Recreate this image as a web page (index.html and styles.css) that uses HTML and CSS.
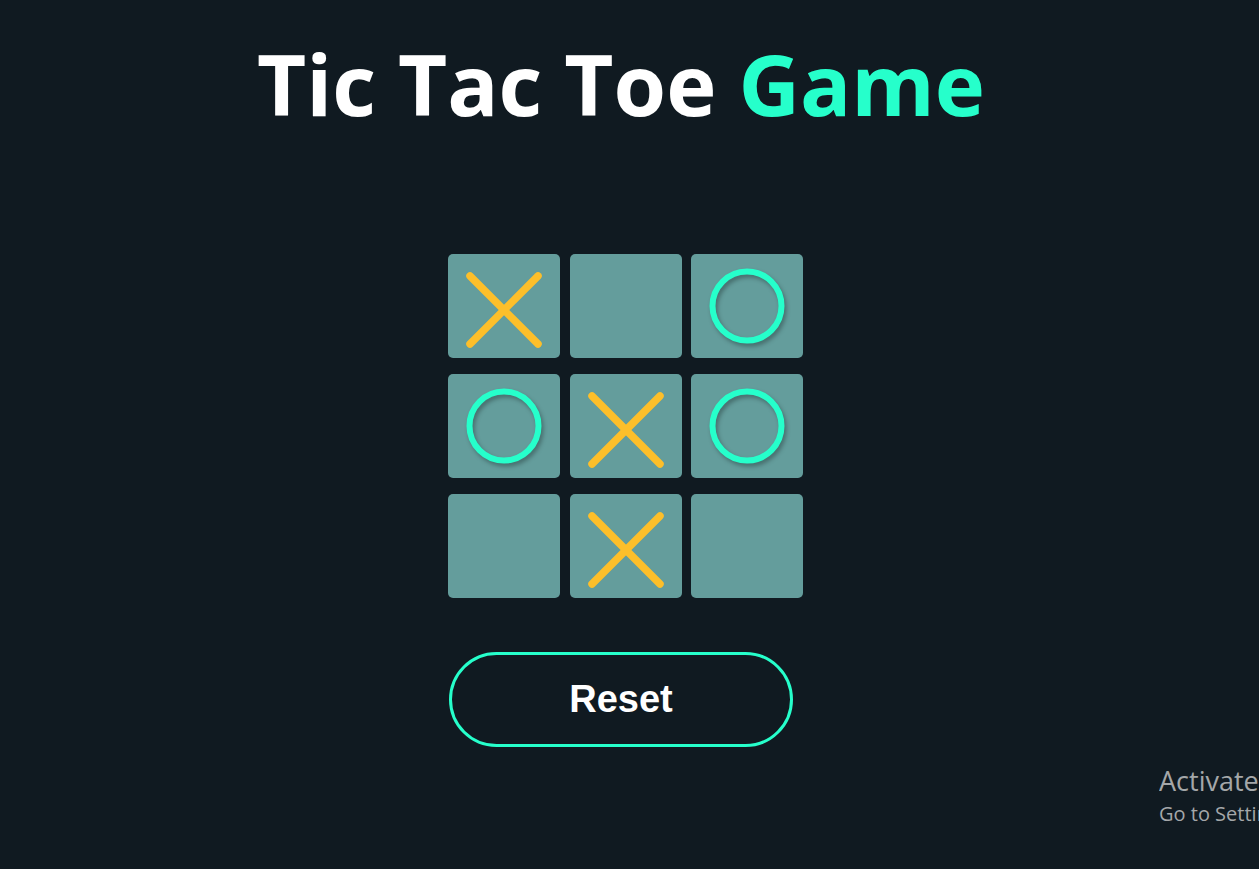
FILE: index.html
```html
<!DOCTYPE html>
<html lang="en">
<head>
<meta charset="utf-8">
<title>Tic Tac Toe Game</title>
<link rel="stylesheet" href="styles.css">
</head>
<body>
<main class="app">
  <h1 class="title">Tic Tac Toe <span class="accent">Game</span></h1>
  <div class="board">
    <div class="cell"><svg class="mark" viewBox="0 0 112 104" width="112" height="104"><line class="x" x1="22" y1="22" x2="90" y2="90"/><line class="x" x1="90" y1="22" x2="22" y2="90"/></svg></div>
    <div class="cell"></div>
    <div class="cell"><svg class="mark o-mark" viewBox="0 0 112 104" width="112" height="104"><circle class="o" cx="56" cy="52" r="34.5"/></svg></div>
    <div class="cell"><svg class="mark o-mark" viewBox="0 0 112 104" width="112" height="104"><circle class="o" cx="56" cy="52" r="34.5"/></svg></div>
    <div class="cell"><svg class="mark" viewBox="0 0 112 104" width="112" height="104"><line class="x" x1="22" y1="22" x2="90" y2="90"/><line class="x" x1="90" y1="22" x2="22" y2="90"/></svg></div>
    <div class="cell"><svg class="mark o-mark" viewBox="0 0 112 104" width="112" height="104"><circle class="o" cx="56" cy="52" r="34.5"/></svg></div>
    <div class="cell"></div>
    <div class="cell"><svg class="mark" viewBox="0 0 112 104" width="112" height="104"><line class="x" x1="22" y1="22" x2="90" y2="90"/><line class="x" x1="90" y1="22" x2="22" y2="90"/></svg></div>
    <div class="cell"></div>
  </div>
  <button class="reset" type="button">Reset</button>
</main>
<div class="watermark">
  <div class="wm-title">Activate Windows</div>
  <div class="wm-sub">Go to Settings to activate Windows.</div>
</div>
</body>
</html>
```
FILE: styles.css
```css
html, body {
  margin: 0;
  padding: 0;
  height: 100%;
  overflow: hidden;
}
body {
  background: #101a21;
  font-family: "Open Sans", "Liberation Sans", sans-serif;
  color: #ffffff;
}
.app {
  width: 1242px;
  display: flex;
  flex-direction: column;
  align-items: center;
}
.title {
  margin: 23px 0 0;
  font-size: 85px;
  font-weight: 700;
  line-height: 120px;
  letter-spacing: 0;
}
.accent {
  color: #26ffcb;
}
.board {
  margin-top: 111px;
  margin-left: 9px;
  display: grid;
  grid-template-columns: repeat(3, 112px);
  grid-auto-rows: 104px;
  column-gap: 9.5px;
  row-gap: 16px;
}
.cell {
  background: #649d9c;
  border-radius: 5px;
  display: flex;
}
.mark {
  display: block;
}
.x {
  stroke: #fdbf2a;
  stroke-width: 7.5;
  stroke-linecap: round;
}
.o {
  fill: none;
  stroke: #26ffcb;
  stroke-width: 6;
}
.o-mark {
  filter: drop-shadow(2px 3px 2px rgba(0, 0, 0, 0.3));
}
.reset {
  margin-top: 54px;
  width: 344px;
  height: 95px;
  border: 3px solid #26ffcb;
  border-radius: 48px;
  background: transparent;
  color: #ffffff;
  font-family: "Liberation Sans", Arial, sans-serif;
  font-weight: 700;
  font-size: 38px;
  cursor: pointer;
}
.watermark {
  position: absolute;
  left: 1159px;
  right: 0;
  top: 762px;
  overflow: hidden;
  color: #a4a7a9;
  white-space: nowrap;
  font-family: "Open Sans", sans-serif;
}
.wm-title {
  font-size: 27px;
  line-height: 38px;
}
.wm-sub {
  font-size: 20px;
  line-height: 28px;
}
```
